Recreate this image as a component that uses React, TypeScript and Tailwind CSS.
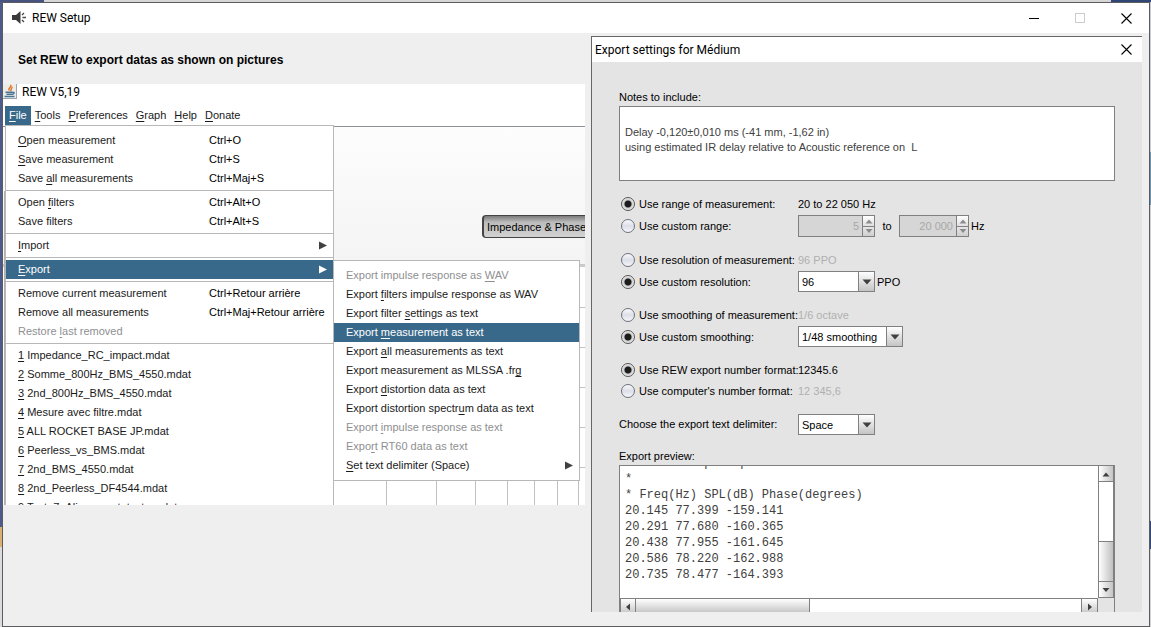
import React from "react";

interface MenuEntry {
  label: string;
  shortcut?: string;
  submenu?: boolean;
  disabled?: boolean;
  active?: boolean;
}

// "&" stands before the mnemonic letter of a label
const menuBar = ["&File", "&Tools", "&Preferences", "&Graph", "&Help", "&Donate"];

const fileMenu: MenuEntry[][] = [
  [
    { label: "&Open measurement", shortcut: "Ctrl+O" },
    { label: "&Save measurement", shortcut: "Ctrl+S" },
    { label: "Save &all measurements", shortcut: "Ctrl+Maj+S" },
  ],
  [
    { label: "Open &filters", shortcut: "Ctrl+Alt+O" },
    { label: "Save filters", shortcut: "Ctrl+Alt+S" },
  ],
  [{ label: "&Import", submenu: true }],
  [{ label: "&Export", submenu: true, active: true }],
  [
    { label: "Remove current measurement", shortcut: "Ctrl+Retour arrière" },
    { label: "Remove all measurements", shortcut: "Ctrl+Maj+Retour arrière" },
    { label: "Restore &last removed", disabled: true },
  ],
  [
    { label: "&1 Impedance_RC_impact.mdat" },
    { label: "&2 Somme_800Hz_BMS_4550.mdat" },
    { label: "&3 2nd_800Hz_BMS_4550.mdat" },
    { label: "&4 Mesure avec filtre.mdat" },
    { label: "&5 ALL ROCKET BASE JP.mdat" },
    { label: "&6 Peerless_vs_BMS.mdat" },
    { label: "&7 2nd_BMS_4550.mdat" },
    { label: "&8 2nd_Peerless_DF4544.mdat" },
    { label: "&9 Test_7_Alignement_tests.mdat" },
  ],
];

const exportMenu: MenuEntry[] = [
  { label: "Export impulse response as &WAV", disabled: true },
  { label: "Export &filters impulse response as WAV" },
  { label: "Export filter &settings as text" },
  { label: "Export &measurement as text", active: true },
  { label: "Export &all measurements as text" },
  { label: "Export measurement as MLSSA .fr&g" },
  { label: "Export &distortion data as text" },
  { label: "Export distortion spectr&um data as text" },
  { label: "Export &impulse response as text", disabled: true },
  { label: "Expo&rt RT60 data as text", disabled: true },
  { label: "&Set text delimiter (Space)", submenu: true },
];

const preview = [
  "           p    p",
  "*",
  "* Freq(Hz) SPL(dB) Phase(degrees)",
  "20.145 77.399 -159.141",
  "20.291 77.680 -160.365",
  "20.438 77.955 -161.645",
  "20.586 78.220 -162.988",
  "20.735 78.477 -164.393",
].join("\n");

const Mnemonic = ({ text }: { text: string }) => {
  const at = text.indexOf("&");
  if (at < 0) return <>{text}</>;
  return (
    <>
      {text.slice(0, at)}
      <span className="underline underline-offset-2">{text[at + 1]}</span>
      {text.slice(at + 2)}
    </>
  );
};

const MenuItem = ({ item, wide }: { item: MenuEntry; wide?: boolean }) => (
  <button
    type="button"
    disabled={item.disabled}
    className={`flex h-[19px] w-full items-center whitespace-nowrap pl-3 pr-1.5 text-left ${
      item.active ? "bg-[#39698a] text-white" : item.disabled ? "text-[#8e8f91]" : "text-[#1a1a1a]"
    }`}
  >
    <span className={wide ? "w-[191px]" : ""}>
      <Mnemonic text={item.label} />
    </span>
    {item.shortcut && <span className="text-black">{item.shortcut}</span>}
    {item.submenu && (
      <svg className="ml-auto" width="8" height="9" viewBox="0 0 8 9">
        <path d="M0 0.5 8 4.5 0 8.5z" fill={item.active ? "#fff" : "#404040"} />
      </svg>
    )}
  </button>
);

const SpeakerIcon = () => (
  <svg width="16" height="16" viewBox="0 0 16 16">
    <path d="M1 5h4L9.5 1v13L5 10H1z" fill="#3a3a3a" />
    <path d="M11 5 13 3M11.500 7.500H15M11 10l2 2" stroke="#4a4a4a" strokeWidth="1.400" fill="none" />
  </svg>
);

const JavaIcon = () => (
  <svg width="14" height="15" viewBox="0 0 14 15">
    <rect width="14" height="15" fill="#9aa5ad" />
    <rect width="13" height="14" fill="#ebebe8" />
    <path d="M7.500 1c2 2-3.500 3-1 5.500M9.500 3C7.500 4.500 9 5.500 7.500 7" stroke="#e0762a" strokeWidth="1.500" fill="none" />
    <path d="M2.500 8.200h7M3.500 10.200h5.500M9.500 8.500c2.500-.8 2 1.700-.5 1.700M1.500 12.500h10" stroke="#4a7595" strokeWidth="1.400" fill="none" />
  </svg>
);

const CloseIcon = () => (
  <svg width="11" height="11" viewBox="0 0 11 11">
    <path d="M0.500 0.500l10 10M10.500 0.500l-10 10" stroke="#000" strokeWidth="1.100" fill="none" />
  </svg>
);

const Arrow = ({ dir, color = "#404040" }: { dir: "up" | "down" | "left" | "right"; color?: string }) => {
  const paths = {
    up: "M0.500 6.500h7L4 2.500z",
    down: "M0.500 2h7L4 6z",
    left: "M6 0.500v7L2 4z",
    right: "M2 0.500v7L6 4z",
  };
  return (
    <svg width="8" height="8" viewBox="0 0 8 8">
      <path d={paths[dir]} fill={color} />
    </svg>
  );
};

const Chart = () => (
  <svg className="absolute left-0 top-0" width="582" height="380">
    <rect x="0" y="142" width="582" height="238" fill="#fff" />
    <rect x="0" y="139" width="582" height="3" fill="#cbcbcb" />
    <path d="M1.500 66V380" stroke="#b4b0b2" />
    <path
      d="M330 182.500H582M330 222.500H582M330 262.500H582M330 302.500H582M330 342.500H582M383.500 142V380M433.500 142V380M472.500 142V380M504.500 142V380M531.500 142V380M554.500 142V380M575.500 142V380"
      stroke="#c0c0c0"
    />
  </svg>
);

const MeasurementWindow = () => (
  <div className="flex min-h-0 flex-1 flex-col overflow-hidden bg-white">
    <div className="flex h-[22px] items-start gap-[5px]">
      <JavaIcon />
      <span className="font-[Roboto,'Segoe_UI',sans-serif] text-[12px] leading-[17px] text-black">REW V5,19</span>
    </div>
    <nav className="flex pl-0.5">
      {menuBar.map((name, i) => (
        <button
          key={name}
          type="button"
          className={`h-[19px] px-1 ${i === 0 ? "bg-[#39698a] text-white" : "text-[#1a1a1a]"}`}
        >
          <Mnemonic text={name} />
        </button>
      ))}
    </nav>
    <div className="relative min-h-0 flex-1 overflow-hidden pt-px">
      <Chart />
      <div className="flex h-[138px] items-start justify-end border-t border-[#8d9299] bg-linear-to-b from-[#fdfdfd] to-[#f4f4f4] pt-[88px]">
        <button
          type="button"
          className="h-[23px] w-[103px] whitespace-nowrap rounded-l border-y border-l-2 border-[#444] bg-linear-to-b from-[#7c7c7c] via-[#bcbcbc] via-30% to-[#d2d2d2] pl-[3px] pt-px text-left text-black"
        >
          Impedance &amp; Phase
        </button>
      </div>

      <div className="absolute left-0.5 top-0 w-[329px] border border-[#b8b8b8] bg-white py-[5px]">
        {fileMenu.map((group, i) => (
          <div key={i}>
            {i > 0 && <div className="my-0.5 h-px bg-[#b8b8b8]" />}
            {group.map((item) => (
              <MenuItem key={item.label} item={item} wide />
            ))}
          </div>
        ))}
      </div>

      <div className="absolute left-[330px] top-[135px] w-[247px] border border-[#b8b8b8] bg-white py-[5px]">
        {exportMenu.map((item) => (
          <MenuItem key={item.label} item={item} />
        ))}
      </div>
    </div>
  </div>
);

interface OptionProps {
  id: string;
  group: string;
  label: string;
  checked?: boolean;
  children: React.ReactNode;
}

const Option = ({ id, group, label, checked, children }: OptionProps) => (
  <div className="flex min-h-5 items-center [&>span]:pt-px">
    <div className="flex w-[179px] shrink-0 items-center gap-1 whitespace-nowrap pl-0.5">
      <input
        type="radio"
        id={id}
        name={group}
        defaultChecked={checked}
        className="size-3.5 shrink-0 appearance-none rounded-full border border-[#6d7179] bg-linear-to-b from-[#fafafc] via-[#dcdfe8] to-[#f6f7fa] checked:border-[#555] checked:bg-[radial-gradient(circle,#1c1c1c_3px,#c9c9c9_4px,#eeeeee_6px)]"
      />
      <label htmlFor={id} className="pt-px">{label}</label>
    </div>
    {children}
  </div>
);

const Combo = ({ id, label, value, width }: { id: string; label: string; value: string; width: string }) => (
  <div className={`flex h-[21px] border border-[#808080] bg-white ${width}`}>
    <select id={id} aria-label={label} className="min-w-0 flex-1 appearance-none pl-[3px] pt-px text-black outline-none">
      <option>{value}</option>
    </select>
    <span className="flex w-4 items-center justify-center border-l border-[#808080] bg-linear-to-b from-white to-[#c4c4c4]">
      <svg width="10" height="6" viewBox="0 0 10 6">
        <path d="M0.500 0.500h9L5 5.500z" fill="#404040" />
      </svg>
    </span>
  </div>
);

const Spinner = ({ label, value, width }: { label: string; value: string; width: string }) => (
  <div className={`flex h-[22px] border border-[#808080] bg-[#d6d6d6] ${width}`}>
    <input
      type="text"
      aria-label={label}
      defaultValue={value}
      disabled
      className="min-w-0 flex-1 pr-[3px] text-right text-[#a8a8a8]"
    />
    <span className="flex w-3 shrink-0 flex-col border-l border-[#808080]">
      <button type="button" aria-label="Increase" disabled className="flex flex-1 items-center justify-center bg-linear-to-b from-white to-[#e0e0e0]">
        <Arrow dir="up" color="#8c8c8c" />
      </button>
      <button type="button" aria-label="Decrease" disabled className="flex flex-1 items-center justify-center border-t border-[#808080] bg-linear-to-b from-[#e6e6e6] to-[#cfcfcf]">
        <Arrow dir="down" color="#8c8c8c" />
      </button>
    </span>
  </div>
);

const ExportPreview = () => (
  <div className="border border-[#808080] bg-[#e4e4e4]">
    <div className="flex h-[132px]">
      <div className="flex min-w-0 flex-1 flex-col justify-end overflow-hidden bg-white pb-[15px] pl-[5px]">
        <pre className="font-['Liberation_Mono','Courier_New',monospace] text-[12px] leading-4 text-[#404040]">{preview}</pre>
      </div>
      <div className="flex w-4 flex-col border-x border-b border-[#808080] bg-white">
        <button type="button" aria-label="Scroll up" className="flex h-4 items-center justify-center border-b border-[#808080] bg-linear-to-r from-white to-[#c4c4c4]">
          <Arrow dir="up" />
        </button>
        <div className="flex-1" />
        <div className="h-10 border-t border-[#808080] bg-linear-to-r from-white to-[#c0c0c0]" />
        <button type="button" aria-label="Scroll down" className="flex h-4 items-center justify-center border-t border-[#808080] bg-linear-to-r from-white to-[#c4c4c4]">
          <Arrow dir="down" />
        </button>
      </div>
    </div>
    <div className="mr-4 flex h-4 border-x border-t border-[#808080] bg-white">
      <button type="button" aria-label="Scroll left" className="flex w-[15px] items-center justify-center border-r border-[#808080] bg-linear-to-b from-white to-[#c4c4c4]">
        <Arrow dir="left" />
      </button>
      <div className="w-[174px] border-r border-[#808080] bg-linear-to-b from-white to-[#c0c0c0]" />
      <button type="button" aria-label="Scroll right" className="ml-auto flex w-4 items-center justify-center border-l border-[#808080] bg-linear-to-b from-white to-[#c4c4c4]">
        <Arrow dir="right" />
      </button>
    </div>
  </div>
);

const ExportDialog = () => (
  <section className="mt-[3px] flex min-h-0 flex-col overflow-hidden border-l border-t border-[#666] bg-[#e4e4e4]">
    <header className="flex h-[25px] shrink-0 items-center justify-between bg-white pl-[3px] pr-2.5">
      <h2 className="font-[Roboto,'Segoe_UI',sans-serif] text-[12px] text-black">Export settings for Médium</h2>
      <button type="button" aria-label="Close dialog">
        <CloseIcon />
      </button>
    </header>
    <form className="flex flex-col px-[27px] pt-[26px] text-black">
      <label htmlFor="notes" className="leading-[18px]">Notes to include:</label>
      <textarea
        id="notes"
        readOnly
        value={"\nDelay -0,120±0,010 ms (-41 mm, -1,62 in)\nusing estimated IR delay relative to Acoustic reference on  L"}
        className="h-[75px] resize-none overflow-hidden border border-[#808080] bg-white px-[5px] py-[3px] leading-[15px] text-[#404040] outline-none"
      />

      <div className="mt-[13px] flex flex-col gap-[13px]">
        <div className="flex flex-col gap-px">
          <Option id="range-m" group="range" label="Use range of measurement:" checked>
            <span>20 to 22 050 Hz</span>
          </Option>
          <Option id="range-c" group="range" label="Use custom range:">
            <Spinner label="Start frequency" value="5" width="w-[77px]" />
            <span className="w-6 text-center">to</span>
            <Spinner label="End frequency" value="20 000" width="w-[70px]" />
            <span className="pl-0.5">Hz</span>
          </Option>
        </div>
        <div className="flex flex-col gap-px">
          <Option id="res-m" group="resolution" label="Use resolution of measurement:">
            <span className="text-[#b0b0b0]">96 PPO</span>
          </Option>
          <Option id="res-c" group="resolution" label="Use custom resolution:" checked>
            <Combo id="resolution" label="Custom resolution" value="96" width="w-[77px]" />
            <span className="pl-0.5">PPO</span>
          </Option>
        </div>
        <div className="flex flex-col gap-px">
          <Option id="smooth-m" group="smoothing" label="Use smoothing of measurement:">
            <span className="text-[#b0b0b0]">1/6 octave</span>
          </Option>
          <Option id="smooth-c" group="smoothing" label="Use custom smoothing:" checked>
            <Combo id="smoothing" label="Custom smoothing" value="1/48 smoothing" width="w-[105px]" />
          </Option>
        </div>
        <div className="flex flex-col gap-px">
          <Option id="format-r" group="format" label="Use REW export number format:" checked>
            <span>12345.6</span>
          </Option>
          <Option id="format-c" group="format" label="Use computer's number format:">
            <span className="text-[#b0b0b0]">12 345,6</span>
          </Option>
        </div>
        <div className="flex items-center">
          <label htmlFor="delimiter" className="w-[179px]">Choose the export text delimiter:</label>
          <Combo id="delimiter" label="Export text delimiter" value="Space" width="w-[77px]" />
        </div>
      </div>

      <p className="mt-3 leading-[18px]">Export preview:</p>
      <ExportPreview />
    </form>
  </section>
);

const App: React.FC = () => {
  return (
    <div className="flex h-screen flex-col overflow-hidden bg-[#d6d6d6] font-['Liberation_Sans',Arial,sans-serif] text-[11px]">
      <div className="flex h-0.5 shrink-0">
        <div className="w-11 bg-[#46527f]" />
        <div className="flex-1" />
        <div className="w-10 bg-[#2f4675]" />
      </div>
      <div className="flex min-h-0 flex-1">
        <div className="flex w-0.5 flex-col">
          <div className="flex-1 bg-[#4c5a8c]" />
          <div className="h-5 bg-[#d9b271]" />
          <div className="h-20 bg-[#dcdcdf]" />
        </div>
        <div className="flex min-w-0 flex-1 flex-col border border-[#5c5c60] bg-[#efefef]">
          <header className="flex h-[30px] shrink-0 items-center bg-white pl-2">
            <SpeakerIcon />
            <h1 className="pl-[5px] font-[Roboto,'Segoe_UI',sans-serif] text-[12px] text-black">REW Setup</h1>
            <div className="ml-auto flex h-full">
              <button type="button" aria-label="Minimize" className="flex w-[46px] items-center justify-center">
                <span className="h-px w-2.5 bg-black" />
              </button>
              <button type="button" aria-label="Maximize" disabled className="flex w-[46px] items-center justify-center">
                <span className="size-2.5 border border-[#cccccc]" />
              </button>
              <button type="button" aria-label="Close" className="flex w-[46px] items-center justify-center">
                <CloseIcon />
              </button>
            </div>
          </header>
          <main className="grid min-h-0 flex-1 grid-cols-[582fr_551fr] grid-rows-[minmax(0,1fr)] gap-1.5 pb-3.5 pr-[7px]">
            <section className="flex min-h-0 min-w-0 flex-col pb-[107px]">
              <h2 className="pb-4 pl-[15px] pt-[19px] text-[12px] font-bold leading-4 text-black">
                Set REW to export datas as shown on pictures
              </h2>
              <MeasurementWindow />
            </section>
            <ExportDialog />
          </main>
        </div>
        <div className="flex w-px flex-col">
          <div className="h-[150px] bg-[#c9cbd2]" />
          <div className="h-[53px] bg-[#6f93ad]" />
          <div className="flex-1 bg-[#d0d0d4]" />
          <div className="h-7 bg-[#34497a]" />
          <div className="h-[78px] bg-[#d4d4d8]" />
        </div>
      </div>
    </div>
  );
};

export default App;
